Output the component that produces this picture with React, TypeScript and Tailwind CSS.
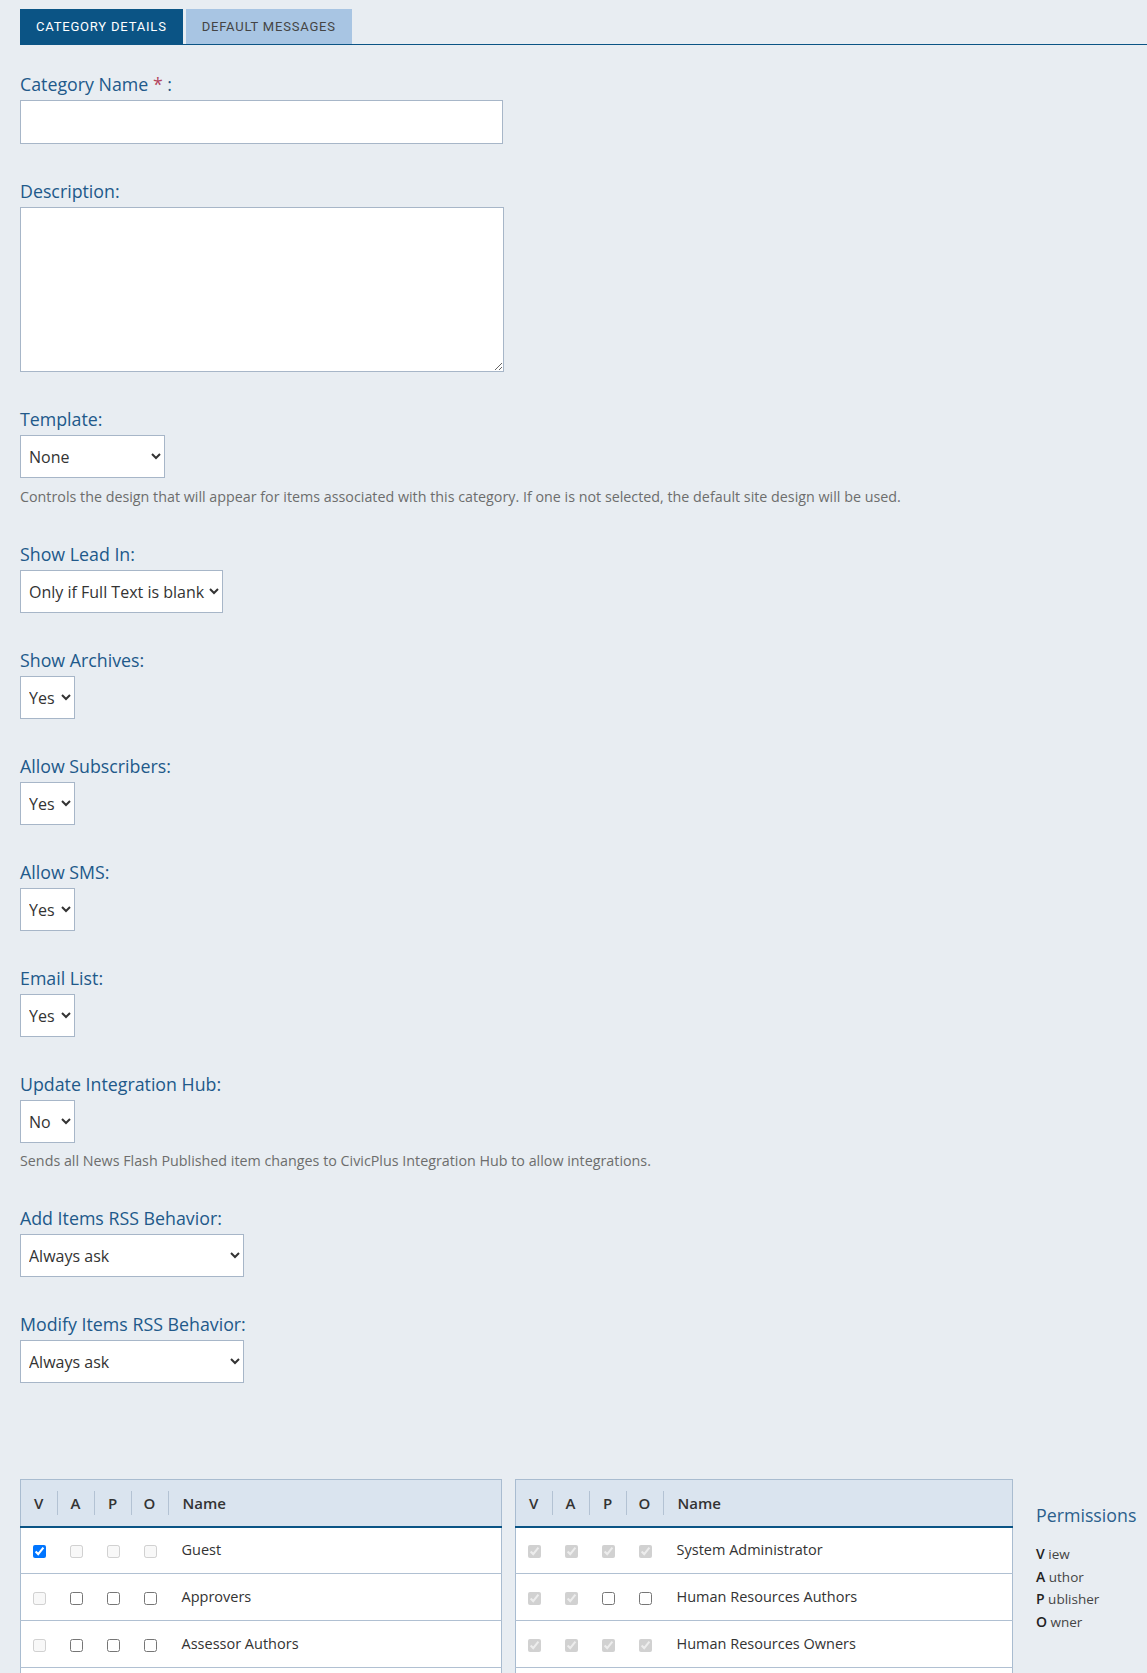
import {useState} from "react";

type Perm = "on" | "off" | "lockedOn" | "lockedOff";

type Row = {
    name: string;
    v: Perm;
    a: Perm;
    p: Perm;
    o: Perm;
};

const leftRows: Row[] = [
    {name: "Guest", v: "on", a: "lockedOff", p: "lockedOff", o: "lockedOff"},
    {name: "Approvers", v: "lockedOff", a: "off", p: "off", o: "off"},
    {name: "Assessor Authors", v: "lockedOff", a: "off", p: "off", o: "off"},
];

const rightRows: Row[] = [
    {name: "System Administrator", v: "lockedOn", a: "lockedOn", p: "lockedOn", o: "lockedOn"},
    {name: "Human Resources Authors", v: "lockedOn", a: "lockedOn", p: "off", o: "off"},
    {name: "Human Resources Owners", v: "lockedOn", a: "lockedOn", p: "lockedOn", o: "lockedOn"},
];

function Field({label, children}: {label: string; children: React.ReactNode}) {
    return (
        <div className="mt-[35px]">
            <label className="mb-1 block text-[17.8px] leading-6 text-[#21598a]">{label}:</label>
            {children}
        </div>
    );
}

function Select({options, width}: {options: string[]; width: string}) {
    return (
        <select
            className={`h-[43px] border border-[#a7b6c8] bg-white pl-[4px] text-[16px] text-[#333] ${width}`}
            defaultValue={options[0]}
        >
            {options.map((o) => (
                <option key={o}>{o}</option>
            ))}
        </select>
    );
}

function Box({state}: {state: Perm}) {
    const checked = state === "on" || state === "lockedOn";
    const disabled = state === "lockedOn" || state === "lockedOff";
    return (
        <td className="w-[37px] text-center align-middle">
            <input
                type="checkbox"
                defaultChecked={checked}
                disabled={disabled}
                className="m-0 h-[13px] w-[13px] align-middle"
            />
        </td>
    );
}

function PermTable({rows, width}: {rows: Row[]; width: string}) {
    return (
        <table className={`border-collapse border border-[#a9bcd0] ${width}`}>
            <thead>
                <tr className="h-[47px] border-b-2 border-[#0b5485] bg-[#dae4ef] text-[15px] text-[#333]">
                    {["V", "A", "P", "O"].map((h) => (
                        <th key={h} className="w-[37px] p-0 font-semibold">
                            <div className="border-r border-[#b3c2d3] leading-6">{h}</div>
                        </th>
                    ))}
                    <th className="pl-[14px] text-left font-semibold">Name</th>
                </tr>
            </thead>
            <tbody>
                {rows.map((r) => (
                    <tr key={r.name} className="h-[47px] border-b border-[#b0c0d2] bg-white text-[14.5px] text-[#333]">
                        <Box state={r.v}/>
                        <Box state={r.a}/>
                        <Box state={r.p}/>
                        <Box state={r.o}/>
                        <td className="pl-[13px]">{r.name}</td>
                    </tr>
                ))}
                <tr className="h-[47px] bg-white">
                    <td colSpan={5}/>
                </tr>
            </tbody>
        </table>
    );
}

export default function App() {
    const [tab, setTab] = useState<"details" | "messages">("details");

    const tabClass = (active: boolean) =>
        `h-[35px] px-4 font-['Roboto',sans-serif] text-[13px] tracking-[0.8px] ${active ? "bg-[#0b5485] text-white" : "bg-[#a8c5e3] text-[#444]"}`;

    return (
        <div className="h-[1673px] overflow-hidden bg-[#e8edf2] pl-5 pt-[9px] font-['Open_Sans',sans-serif]">
            <div className="flex gap-[3px] border-b border-[#0b5485]">
                <button type="button" onClick={() => setTab("details")} className={tabClass(tab === "details")}>
                    CATEGORY DETAILS
                </button>
                <button type="button" onClick={() => setTab("messages")} className={tabClass(tab === "messages")}>
                    DEFAULT MESSAGES
                </button>
            </div>

            <div className="mt-[27px] mb-1 text-[17.8px] leading-6 text-[#21598a]">
                Category Name<span className="text-[#b3455c]"> *</span> :
            </div>
            <input type="text" className="block h-[44px] w-[483px] border border-[#a7b6c8] bg-white"/>

            <Field label="Description">
                <textarea className="block h-[165px] w-[484px] border border-[#a7b6c8] bg-white"/>
            </Field>

            <Field label="Template">
                <Select options={["None"]} width="w-[145px]"/>
                <p className="mt-[9px] text-[14.3px] leading-5 text-[#6d6d6d]">
                    Controls the design that will appear for items associated with this category. If one is not selected, the default site design will be used.
                </p>
            </Field>

            <Field label="Show Lead In">
                <Select options={["Only if Full Text is blank", "Always", "Never"]} width="w-[203px]"/>
            </Field>

            <Field label="Show Archives">
                <Select options={["Yes", "No"]} width="w-[55px]"/>
            </Field>

            <Field label="Allow Subscribers">
                <Select options={["Yes", "No"]} width="w-[55px]"/>
            </Field>

            <Field label="Allow SMS">
                <Select options={["Yes", "No"]} width="w-[55px]"/>
            </Field>

            <Field label="Email List">
                <Select options={["Yes", "No"]} width="w-[55px]"/>
            </Field>

            <Field label="Update Integration Hub">
                <Select options={["No", "Yes"]} width="w-[55px]"/>
                <p className="mt-[8px] text-[14.3px] leading-5 text-[#6d6d6d]">
                    Sends all News Flash Published item changes to CivicPlus Integration Hub to allow integrations.
                </p>
            </Field>

            <Field label="Add Items RSS Behavior">
                <Select options={["Always ask", "Always add", "Never add"]} width="w-[224px]"/>
            </Field>

            <Field label="Modify Items RSS Behavior">
                <Select options={["Always ask", "Always update", "Never update"]} width="w-[224px]"/>
            </Field>

            <div className="mt-[96px] flex items-start gap-[13px]">
                <PermTable rows={leftRows} width="w-[482px]"/>
                <PermTable rows={rightRows} width="w-[498px]"/>
                <div className="ml-[10px] pt-[24px]">
                    <div className="text-[17.8px] leading-6 text-[#2b5f8c]">Permissions</div>
                    <ul className="mt-[16px] text-[13.5px] leading-[22.5px] text-[#444]">
                        <li><b className="text-[14px] font-semibold text-[#222]">V</b> iew</li>
                        <li><b className="text-[14px] font-semibold text-[#222]">A</b> uthor</li>
                        <li><b className="text-[14px] font-semibold text-[#222]">P</b> ublisher</li>
                        <li><b className="text-[14px] font-semibold text-[#222]">O</b> wner</li>
                    </ul>
                </div>
            </div>
        </div>
    );
}
